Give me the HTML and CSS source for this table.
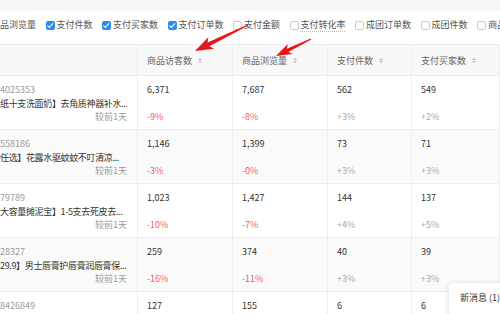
FILE: index.html
```html
<!DOCTYPE html>
<html lang="zh-CN">
<head>
<meta charset="utf-8">
<title>商品数据</title>
<link rel="stylesheet" href="styles.css">
</head>
<body>
<div class="page">
  <div class="topbar"></div>
  <div class="filters">
    <label class="opt"><span class="cb on"></span>商品浏览量</label>
    <label class="opt"><span class="cb on"></span>支付件数</label>
    <label class="opt"><span class="cb on"></span>支付买家数</label>
    <label class="opt"><span class="cb on"></span>支付订单数</label>
    <label class="opt"><span class="cb"></span>支付金额</label>
    <label class="opt"><span class="cb"></span><span class="dotted">支付转化率</span></label>
    <label class="opt"><span class="cb"></span>成团订单数</label>
    <label class="opt"><span class="cb"></span>成团件数</label>
    <label class="opt"><span class="cb"></span>商品收藏数</label>
  </div>
  <div class="table">
    <div class="row head">
      <div class="cell"></div>
      <div class="cell"><span>商品访客数</span><i class="sort"></i></div>
      <div class="cell"><span>商品浏览量</span><i class="sort"></i></div>
      <div class="cell"><span>支付件数</span><i class="sort"></i></div>
      <div class="cell"><span>支付买家数</span><i class="sort"></i></div>
    </div>
    <div class="row body">
      <div class="cell prod"><div class="id">4025353</div><div class="title">纸十支洗面奶】去角质神器补水...</div><div class="cmp">较前1天</div></div>
      <div class="cell"><div class="n">6,371</div><div class="down">-9%</div></div>
      <div class="cell"><div class="n">7,687</div><div class="down">-8%</div></div>
      <div class="cell"><div class="n">562</div><div class="up">+3%</div></div>
      <div class="cell"><div class="n">549</div><div class="up">+2%</div></div>
    </div>
    <div class="row body alt">
      <div class="cell prod"><div class="id">558186</div><div class="title">任选】花露水驱蚊蚊不叮清凉...</div><div class="cmp">较前1天</div></div>
      <div class="cell"><div class="n">1,146</div><div class="down">-3%</div></div>
      <div class="cell"><div class="n">1,399</div><div class="down">-0%</div></div>
      <div class="cell"><div class="n">73</div><div class="up">+3%</div></div>
      <div class="cell"><div class="n">71</div><div class="up">+3%</div></div>
    </div>
    <div class="row body">
      <div class="cell prod"><div class="id">79789</div><div class="title">大容量摊泥宝】1-5支去死皮去...</div><div class="cmp">较前1天</div></div>
      <div class="cell"><div class="n">1,023</div><div class="down">-10%</div></div>
      <div class="cell"><div class="n">1,427</div><div class="down">-7%</div></div>
      <div class="cell"><div class="n">144</div><div class="up">+4%</div></div>
      <div class="cell"><div class="n">137</div><div class="up">+5%</div></div>
    </div>
    <div class="row body alt">
      <div class="cell prod"><div class="id">28327</div><div class="title">29.9】男士唇膏护唇膏润唇膏保...</div><div class="cmp">较前1天</div></div>
      <div class="cell"><div class="n">259</div><div class="down">-16%</div></div>
      <div class="cell"><div class="n">374</div><div class="down">-11%</div></div>
      <div class="cell"><div class="n">40</div><div class="up">+3%</div></div>
      <div class="cell"><div class="n">39</div><div class="up">+3%</div></div>
    </div>
    <div class="row body">
      <div class="cell prod"><div class="id">8426849</div><div class="title"></div><div class="cmp"></div></div>
      <div class="cell"><div class="n">127</div><div></div></div>
      <div class="cell"><div class="n">155</div><div></div></div>
      <div class="cell"><div class="n">6</div><div></div></div>
      <div class="cell"><div class="n">6</div><div></div></div>
    </div>
  </div>
  <div class="toast">新消息 (1)</div>
  <svg class="arrows" width="500" height="314" viewBox="0 0 500 314">
    <polygon fill="#e8141c" transform="translate(248 25) rotate(153.9)" points="0,-0.6 44,-2 41,-6.5 59,0 41,6.5 44,2 0,0.6"/>
    <polygon fill="#e8141c" transform="translate(311 39) rotate(154.1)" points="0,-0.6 26,-1.8 23,-5.5 39,0 23,5.5 26,1.8 0,0.6"/>
  </svg>
</div>
</body>
</html>
```

FILE: styles.css
```css
* { box-sizing: border-box; }
body {
  margin: 0;
  background: #fff;
  font-family: "Noto Sans CJK SC", "Noto Sans", sans-serif;
  font-size: 9px;
  color: #333;
}
.page {
  position: relative;
  width: 500px;
  height: 314px;
  overflow: hidden;
}
.topbar {
  height: 11px;
  background: #f6f6f6;
}
.filters {
  display: flex;
  align-items: center;
  gap: 9.5px;
  margin-left: -20px;
  height: 28px;
  white-space: nowrap;
  color: #555;
}
.opt {
  display: flex;
  align-items: center;
  gap: 2px;
  line-height: 12px;
  flex: none;
}
.cb {
  position: relative;
  flex: none;
  width: 9px;
  height: 9px;
  border: 1px solid #ccc;
  border-radius: 2px;
  background: #fff;
}
.cb.on {
  background: #2d8cf0;
  border-color: #2d8cf0;
}
.cb.on::after {
  content: "";
  position: absolute;
  left: 2.3px;
  top: 0.3px;
  width: 2.2px;
  height: 4.5px;
  border: solid #fff;
  border-width: 0 1.3px 1.3px 0;
  transform: rotate(45deg);
}
.dotted {
  text-decoration: underline dotted #bbb;
  text-underline-offset: 3px;
}
.table {
  margin-top: 5px;
  border-top: 1px solid #eee;
}
.row {
  display: grid;
  grid-template-columns: 138px 95px 95px 84px 88px;
  border-bottom: 1px solid #eee;
}
.cell {
  border-right: 1px solid #eee;
}
.head {
  background: #f8f8f8;
}
.head .cell {
  height: 30px;
  display: flex;
  align-items: center;
  padding-left: 9px;
  color: #666;
}
.sort {
  display: inline-flex;
  flex-direction: column;
  gap: 1px;
  margin-left: 6px;
}
.sort::before,
.sort::after {
  content: "";
  width: 0;
  height: 0;
  border-left: 2px solid transparent;
  border-right: 2px solid transparent;
}
.sort::before { border-bottom: 2.5px solid #bbb; }
.sort::after { border-top: 2.5px solid #bbb; }
.alt { background: #fafafa; }
.body .cell {
  height: 53px;
  padding: 8px 0 6px 9px;
  display: flex;
  flex-direction: column;
  justify-content: space-between;
  line-height: 12px;
  white-space: nowrap;
}
.body .prod {
  padding: 8px 10px 6px 0;
  overflow: hidden;
}
.id { color: #999; }
.title {
  color: #333;
  overflow: hidden;
  height: 12px;
  letter-spacing: -0.35px;
}
.cmp {
  text-align: right;
  color: #999;
  height: 12px;
}
.n { color: #333; }
.down { color: #f25b67; }
.up { color: #aaa; }
.toast {
  position: absolute;
  left: 449px;
  top: 283px;
  width: 90px;
  height: 60px;
  padding: 9px 0 0 11px;
  background: #fff;
  border-radius: 4px;
  box-shadow: 0 1px 6px rgba(0, 0, 0, 0.15);
  line-height: 12px;
  color: #333;
  white-space: nowrap;
}
.arrows {
  position: absolute;
  left: 0;
  top: 0;
  pointer-events: none;
}
```
